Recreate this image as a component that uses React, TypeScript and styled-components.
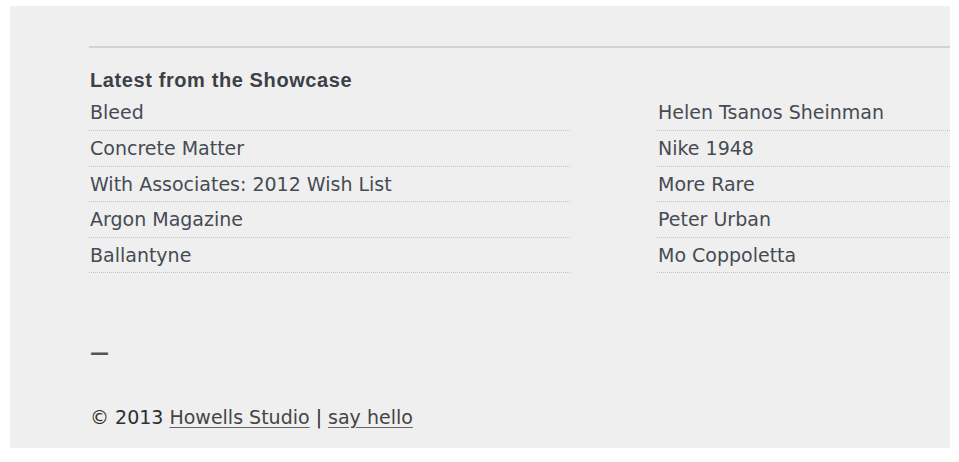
import React from "react";
import styled, { createGlobalStyle } from "styled-components";

const Global = createGlobalStyle`
  html, body { margin: 0; padding: 0; background: #ffffff; }
  body { font-family: "DejaVu Sans", Verdana, sans-serif; }
`;

const Panel = styled.div`
  margin: 6px 9px 0 10px;
  height: 442px;
  background: #efefef;
  overflow: hidden;
  padding: 40px 0 0 79px;
  box-sizing: border-box;
`;

const Rule = styled.hr`
  margin: 0;
  border: 0;
  border-top: 2px solid #d2d2d2;
  height: 0;
`;

const Heading = styled.h3`
  margin: 20px 0 0 1px;
  font-family: "Liberation Sans", Arial, sans-serif;
  font-weight: 700;
  font-size: 20px;
  line-height: 24px;
  letter-spacing: 0.6px;
  color: #3c4047;
`;

const Columns = styled.div`
  display: grid;
  grid-template-columns: 481px 481px;
  column-gap: 87px;
  margin-top: 3px;
`;

const List = styled.ul`
  list-style: none;
  margin: 0;
  padding: 0;
`;

const Item = styled.li`
  height: 35px;
  line-height: 35px;
  border-bottom: 1px dotted #c4c4c4;
  font-size: 19px;
  color: #464b53;
  padding-left: 1px;
  white-space: nowrap;

  &:nth-child(3),
  &:nth-child(5) {
    height: 34px;
    line-height: 34px;
  }
`;

const Dash = styled.div`
  margin-top: 67px;
  font-size: 19px;
  font-weight: 700;
  line-height: 24px;
  color: #555;
  padding-left: 1px;
`;

const Footer = styled.p`
  margin: 41px 0 0 1px;
  font-size: 19px;
  line-height: 24px;
  color: #2e2e2e;
`;

const FooterLink = styled.a`
  color: #444;
  text-decoration: underline;
  text-underline-offset: 3px;
  text-decoration-color: #666;
`;

const left = ["Bleed", "Concrete Matter", "With Associates: 2012 Wish List", "Argon Magazine", "Ballantyne"];
const right = ["Helen Tsanos Sheinman", "Nike 1948", "More Rare", "Peter Urban", "Mo Coppoletta"];

export default function App() {
  return (
    <>
      <Global />
      <Panel>
        <Rule />
        <Heading>Latest from the Showcase</Heading>
        <Columns>
          <List>
            {left.map((t) => (
              <Item key={t}>{t}</Item>
            ))}
          </List>
          <List>
            {right.map((t) => (
              <Item key={t}>{t}</Item>
            ))}
          </List>
        </Columns>
        <Dash>—</Dash>
        <Footer>
          © 2013 <FooterLink href="#">Howells Studio</FooterLink> | <FooterLink href="#">say hello</FooterLink>
        </Footer>
      </Panel>
    </>
  );
}
